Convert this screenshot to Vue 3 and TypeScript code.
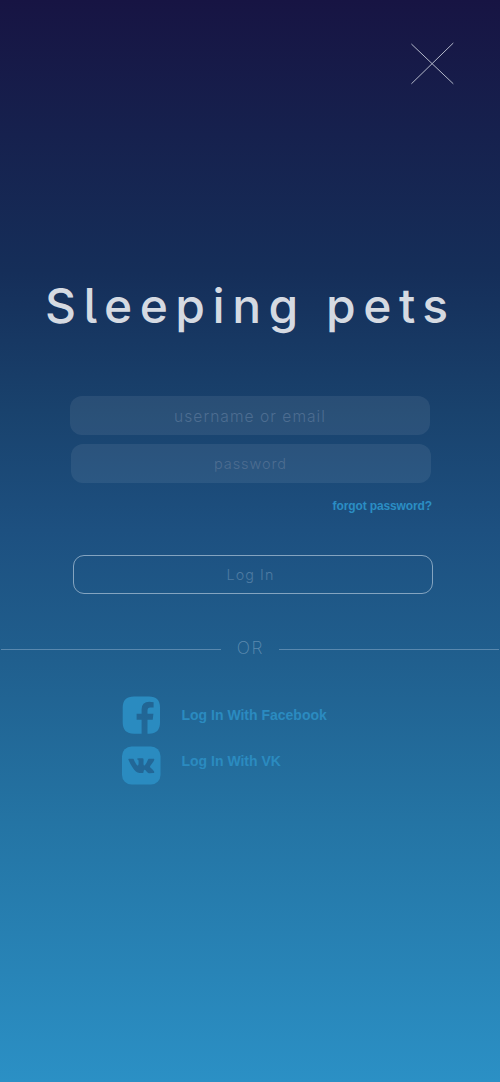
<script setup lang="ts">
import { ref } from 'vue'

const username = ref('')
const password = ref('')
</script>

<template>
  <main class="screen">
    <header class="top">
      <button class="close" type="button" aria-label="Close">
        <svg width="44" height="44" viewBox="0 0 44 44">
          <path d="M1.4 2 L43.3 41.8 M43.3 1 L1.4 41.8" />
        </svg>
      </button>
    </header>
    <h1 class="title">Sleeping <span>pets</span></h1>
    <form class="form" @submit.prevent>
      <input v-model="username" class="field user" type="text" placeholder="username or email" />
      <input v-model="password" class="field pass" type="password" placeholder="password" />
      <a class="forgot">forgot password?</a>
      <button class="login" type="submit">Log In</button>
    </form>
    <div class="divider"><i></i><span>OR</span><i></i></div>
    <nav class="social">
      <a class="provider facebook">
        <svg width="38" height="38" viewBox="0 0 38 38">
          <path fill-rule="evenodd" d="M12 .5H27Q38 .5 38 11.5V26.5Q38 37.7 27 37.7H25.5V23.7H30.7L31.4 17.7H25.5V14.5Q25.5 11.5 28.3 11.5H31.6V6.2Q31 5.8 27.3 5.8Q19.6 5.8 19.6 13.4V17.7H14.6V23.7H19.6V37.7H12Q.7 37.7 .7 26.5V11.5Q.7 .5 12 .5Z" />
        </svg>
        <span>Log In With Facebook</span>
      </a>
      <a class="provider vk">
        <svg width="39" height="39" viewBox="0 0 39 39">
          <rect y=".5" width="38.5" height="38" rx="9.5" />
          <path class="mark" transform="translate(-.1 .8) scale(1.62)" d="M12.785 16.241s.288-.032.436-.194c.136-.148.132-.427.132-.427s-.02-1.304.576-1.496c.588-.19 1.341 1.26 2.14 1.818.605.422 1.064.33 1.064.33l2.137-.03s1.117-.071.587-.964c-.043-.073-.308-.661-1.588-1.87-1.34-1.264-1.16-1.059.453-3.246.983-1.332 1.376-2.145 1.253-2.493-.117-.332-.84-.244-.84-.244l-2.406.015s-.178-.025-.31.056c-.13.079-.212.262-.212.262s-.382 1.03-.89 1.907c-1.07 1.85-1.499 1.948-1.674 1.832-.407-.267-.305-1.075-.305-1.648 0-1.793.267-2.54-.521-2.733-.262-.065-.454-.107-1.123-.114-.858-.009-1.585.003-1.996.208-.274.136-.485.44-.356.457.159.022.519.099.71.363.246.341.237 1.107.237 1.107s.142 2.11-.33 2.371c-.325.18-.77-.187-1.725-1.865-.489-.859-.859-1.81-.859-1.81s-.07-.176-.198-.272c-.154-.115-.37-.151-.37-.151l-2.286.015s-.343.01-.469.161C3.94 7.721 4.043 8 4.043 8s1.79 4.258 3.817 6.403c1.858 1.967 3.968 1.838 3.968 1.838h.957z" />
        </svg>
        <span>Log In With VK</span>
      </a>
    </nav>
  </main>
</template>

<style>
body {
  margin: 0;
}
</style>

<style scoped>
.screen {
  box-sizing: border-box;
  width: 100%;
  height: 1082px;
  overflow: hidden;
  background: linear-gradient(#171443, #152e59 25%, #19426d 38%, #1d5080 49%, #205f8e 61%, #2474a4 76%, #2b90c5);
  font-family: "Liberation Sans", sans-serif;
}
.top {
  display: flex;
  justify-content: flex-end;
  padding: 42px 46px 0 0;
}
.close {
  width: 44px;
  height: 44px;
  padding: 0;
  border: 0;
  background: none;
}
.close svg {
  display: block;
  fill: none;
  stroke: #b4b9ca;
  stroke-width: 1;
}
.title {
  margin: 190px 0 0 45px;
  height: 64px;
  font: 500 48px/60px Inter, sans-serif;
  font-feature-settings: "cv05" 1, "calt" 0;
  letter-spacing: 7.5px;
  white-space: nowrap;
  color: #d5dae2;
}
.form {
  display: flex;
  flex-direction: column;
  margin: 56px 68px 0 70px;
}
.field {
  box-sizing: border-box;
  width: 360px;
  height: 39px;
  padding: 0;
  border: 0;
  border-radius: 12px;
  outline: 0;
  background: rgba(255, 255, 255, 0.075);
  color: #7390ae;
  text-align: center;
  font: 300 15.6px Inter, sans-serif;
  letter-spacing: 1.02px;
}
.field::placeholder {
  color: #4d6d91;
  opacity: 1;
}
.user {
  padding-top: 2px;
}
.pass {
  margin: 9px 0 0 1px;
  padding-right: 1px;
  font-size: 14.5px;
  letter-spacing: 0.9px;
}
.forgot {
  align-self: flex-end;
  margin: 15px 0 0;
  height: 16px;
  font: bold 12px/16px "Liberation Sans", sans-serif;
  letter-spacing: -0.12px;
  color: #2b8ec4;
}
.login {
  box-sizing: border-box;
  width: 360px;
  height: 39px;
  margin: 41px 0 0 2.5px;
  padding: 0 4px 0 0;
  border: 1px solid #84a4c0;
  border-radius: 11px;
  background: none;
  color: #4e7ba2;
  font: 300 14.3px Inter, sans-serif;
  letter-spacing: 1.1px;
}
.divider {
  display: grid;
  grid-template-columns: 220px 58px 1fr;
  align-items: center;
  height: 24px;
  margin: 42px 1px 0;
}
.divider i {
  height: 1px;
  margin-top: 2px;
  background: #5988ae;
}
.divider span {
  padding-left: 1px;
  text-align: center;
  font: 200 17.5px/24px Inter, sans-serif;
  letter-spacing: 1.7px;
  color: #5c8aaf;
}
.social {
  margin: 36px 0 0 122px;
}
.provider {
  display: flex;
  height: 50px;
}
.provider svg {
  flex: none;
  fill: #2a8bc0;
}
.provider .mark {
  fill: #226797;
}
.provider span {
  margin-left: 21.5px;
  font: bold 14px/38px "Liberation Sans", sans-serif;
  color: #2b8bc0;
}
.vk span {
  margin-left: 20.5px;
  line-height: 30px;
}
</style>
